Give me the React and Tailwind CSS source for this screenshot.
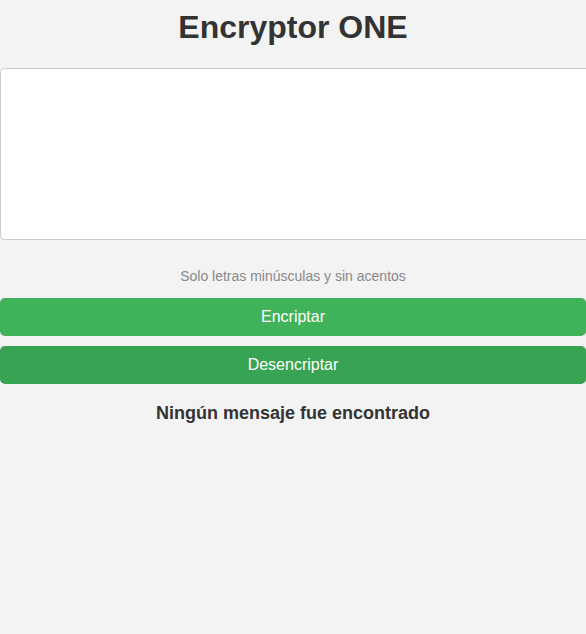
import React, { useState } from 'react';

const App = () => {
    const [text, setText] = useState('');

    return (
        <div className="min-h-[634px] bg-[#f3f3f3] overflow-x-hidden font-['Liberation_Sans',Arial,sans-serif] text-[#333]">
            <h1 className="pt-[9px] text-center text-[32px] leading-[37px] font-bold">Encryptor ONE</h1>

            <div className="mt-[22px]">
                <textarea
                    value={text}
                    onChange={(e) => setText(e.target.value)}
                    className="block w-[calc(100%+16px)] h-[172px] bg-white border border-[#ccc] rounded-[4px] p-2 resize-none text-base focus:outline-none"
                />
            </div>

            <p className="mt-[28px] text-center text-[14px] leading-[16px] text-[#888]">Solo letras minúsculas y sin acentos</p>

            <div className="mt-[14px] flex flex-col gap-[10px]">
                <button className="h-[38px] w-full rounded-[5px] bg-[#3fb25a] text-white text-[16px] flex items-center justify-center">
                    Encriptar
                </button>
                <button className="h-[38px] w-full rounded-[5px] bg-[#38a352] text-white text-[16px] flex items-center justify-center">
                    Desencriptar
                </button>
            </div>

            <p className="mt-[19px] text-center text-[18px] leading-[21px] font-bold">Ningún mensaje fue encontrado</p>
        </div>
    );
};

export default App;
